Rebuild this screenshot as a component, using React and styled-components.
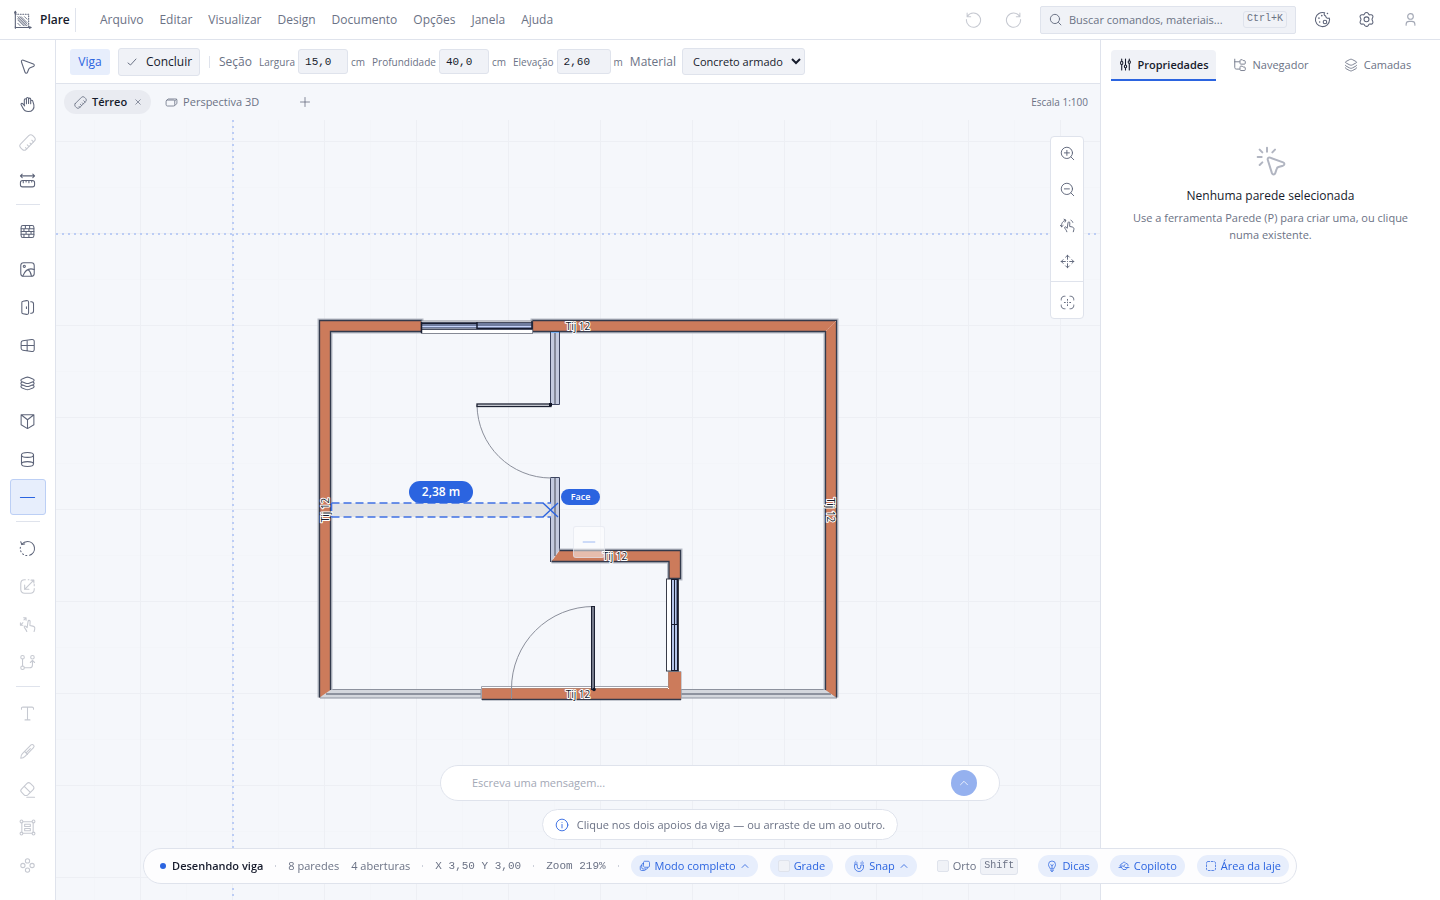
import React from "react";
import styled, { createGlobalStyle, css } from "styled-components";

const SANS = '"Open Sans", "Noto Sans", sans-serif';
const MONO = '"Liberation Mono", monospace';

const c = {
  ink: "#161b2c",
  text: "#6b7285",
  icon: "#5d6479",
  soft: "#a3a8b5",
  faint: "#c6c9d1",
  line: "#dfe3ec",
  field: "#f0f2f7",
  canvas: "#f5f7fb",
  blue: "#2b64e0",
  pale: "#e7eefc",
};

const GlobalStyle = createGlobalStyle`
  *, *::before, *::after { box-sizing: border-box; }
  body { margin: 0; background: #fff; font-family: ${SANS}; font-size: 12px; color: ${c.text}; }
  button, input, select { font: inherit; color: inherit; margin: 0; }
  button { cursor: pointer; }
`;

/* ---------- icons ---------- */

const Svg = styled.svg`
  flex: none;
  display: block;
  width: ${(p) => p.$size}px;
  height: ${(p) => p.$size}px;
  fill: none;
  stroke: currentColor;
  stroke-width: ${(p) => p.$weight};
  stroke-linecap: round;
  stroke-linejoin: round;
`;

const shapes = {
  logo: (
    <>
      <path d="M4 2v19h18" />
      <path d="M4 5h16v16" strokeDasharray="1 2" />
      <path d="M7 8l11 11M11 8l7 7M7 12l7 7M15 8l3 3M7 16l3 3M9 8l9 9M7 10l9 9" strokeWidth="1" />
      <path d="M3 3.500l1-2 1 2zM21 20l2 1-2 1zM4 20v2" />
    </>
  ),
  cursor: <path d="M3.500 5.600c-.6-1.700 1-3.100 2.600-2.500l14.200 5.400c1.800.7 1.700 2.900 0 3.500l-4.500 1.700c-1 .4-1.700 1.100-2.100 2.100l-1.700 4.400c-.7 1.700-2.900 1.700-3.500-.1z" />,
  hand: <path d="M7.500 13V5.500a1.500 1.500 0 0 1 3 0V11M10.500 10.500v-7a1.500 1.500 0 0 1 3 0v7M13.500 10.500v-6a1.500 1.500 0 0 1 3 0V11M16.500 11V7.500a1.500 1.500 0 0 1 3 0l1.500 5c1 5-2 9.500-8 9.500-4.500 0-6-2-7.500-5l-2.500-4.500c-.8-1.500 1-3 2.500-1.500l2.500 3M7.500 12.500V7" />,
  ruler: (
    <g transform="rotate(-45 12 12)">
      <rect x="0" y="6.500" width="24" height="11" rx="4" />
      <path d="M5 17.500V15M9.500 17.500V14M14 17.500V15M18.500 17.500V14" />
    </g>
  ),
  measure: (
    <>
      <rect x="2" y="12" width="20" height="9" rx="3" />
      <path d="M6 12v3M10 12v2M14 12v3M18 12v2M2 5.500h20M4.500 3L2 5.500 4.500 8M19.500 3L22 5.500 19.500 8" />
    </>
  ),
  wall: (
    <>
      <rect x="3" y="3.500" width="18" height="17" rx="2.500" />
      <path d="M3 8h18M3 12h18M3 16h18M9 3.500V8M15 3.500V8M7 8v4M14 8v4M10 12v4M17 12v4M7 16v4M14 16v4" />
    </>
  ),
  terrain: (
    <>
      <rect x="2.500" y="2.500" width="19" height="19" rx="4" />
      <circle cx="7.500" cy="7.500" r="1.500" />
      <path d="M5.500 21C9 12 14 9.500 21.500 12M13 12.500c2.500 1.500 4 4 4.500 8.500" />
    </>
  ),
  door: <path d="M4 5c0-1 .7-1.600 1.700-1.700l5-1c1.500-.3 2.800.7 2.800 2.200v15c0 1.500-1.300 2.500-2.800 2.200l-5-1C4.700 20.600 4 20 4 19zM10.500 11v2.500M16.500 4h1a3 3 0 0 1 3 3v10a3 3 0 0 1-3 3h-1" />,
  window: <path d="M3 8c0-1.500 1-2.400 2.400-2.600L18 3.500c2-.3 3.500.9 3.500 2.700v11.600c0 1.800-1.500 3-3.500 2.700L5.400 18.600C4 18.400 3 17.500 3 16zM11.500 4.500v15M3 12h18.500" />,
  slabs: <path d="M4.500 9.500C2 8 2 6.700 4.500 5.500l5-2c1.700-.7 3.300-.7 5 0l5 2c2.500 1.200 2.500 2.500 0 4l-5 2c-1.700.7-3.300.7-5 0zM4.500 10c-2.500 1.300-2.500 2.500 0 3.800l5 2c1.700.7 3.300.7 5 0l5-2c2.500-1.300 2.500-2.500 0-3.800M4.500 14.500c-2.500 1.300-2.500 2.500 0 3.800l5 2c1.700.7 3.300.7 5 0l5-2c2.500-1.300 2.500-2.500 0-3.800" />,
  roof: <path d="M3 2.500h18v14l-9 5.500-9-5.500zM3 2.500l9 7 9-7M12 9.500v12" />,
  column: (
    <>
      <ellipse cx="12" cy="5.500" rx="8.500" ry="3.500" />
      <path d="M3.500 5.500v13c0 2 3.800 3.500 8.500 3.500s8.500-1.500 8.500-3.500v-13M3.500 18.500c0-2 3.800-3.500 8.500-3.500s8.500 1.500 8.500 3.500" />
    </>
  ),
  beam: <path d="M2 12h20" />,
  rotate: (
    <>
      <path d="M4 6c2-2.500 5-4 8-4a10 10 0 0 1 3 19.500" />
      <path d="M2.500 2.500L4 6.500 8 5.500" />
      <path d="M11 22a10 10 0 0 1-9-12" strokeDasharray="1.500 3.500" />
    </>
  ),
  scale: <path d="M9 2.500H8C4 2.500 2.500 4 2.500 8v8c0 4 1.500 5.500 5.500 5.500h8c4 0 5.500-1.500 5.500-5.500v-1M13 2.500h1M21.500 9v2M17 3h4v4M20.500 3.500L8 16M8 10v6h6" />,
  gesture: <path d="M11 22c-.5-2.500-2.500-4-3.500-6-.7-1.500 1-2.600 2.200-1.400l1.800 1.900 1.300-9c.3-1.900 3-1.700 2.900.4l-.3 5.600 4 .8c2.300.5 3.300 2 2.800 4.200l-.9 3.500M2 9.500v3.500h3.500M2.500 12.500L5.500 9.500M6.500 2.500H10V6M9.500 3L7 5.500" />,
  spin: <path d="M11 22c-.5-2.500-2.500-4-3.500-6-.7-1.500 1-2.600 2.200-1.400l1.800 1.900 1.300-9c.3-1.900 3-1.700 2.900.4l-.3 5.600 4 .8c2.300.5 3.300 2 2.800 4.200l-.9 3.500M2.500 14C2 8.500 4 5 9 3.500M6.500 2l3 1.500L8 6.500M.5 11.500l2 2.500 2.500-2M17.500 3.500c1.500.7 2.500 2 3 3.500" />,
  path: (
    <>
      <circle cx="5" cy="4.500" r="2.500" />
      <circle cx="5" cy="19.500" r="2.500" />
      <circle cx="19" cy="4.500" r="2.500" />
      <path d="M5 7v10M7.500 19.500H15c3 0 4-1.500 4-4V10M16 12l3-3 3 3" />
    </>
  ),
  text: <path d="M3.500 6V5c0-1.300.7-2 2-2h13c1.300 0 2 .7 2 2v1M12 3v18M8.500 21h7" />,
  pencil: <path d="M2.500 21.500c0-3 .8-5 2.300-6.500L17 2.800c1-1 2.400-1 3.500.2 1 1 1 2.400 0 3.400L8.500 18.800C7 20.500 5.500 21.500 2.500 21.500zM8 12l4 4M10 14l6-6" />,
  eraser: <path d="M9.500 20.500c-1 0-1.600-.3-2.300-1l-3.700-3.700c-1.500-1.500-1.500-3 0-4.500l7.800-7.800c1.500-1.500 3.200-1.500 4.700 0L20 7.400c1.500 1.500 1.500 3.200 0 4.700l-7.500 7.400c-.8.7-1.700 1-3 1zM7.500 7.500l8.500 8.500M11 23h11" />,
  frame: (
    <>
      <path d="M5.500 4h13M5.500 20h13M4 5.500v13M20 5.500v13M8 7.500h8v3H8zM8 13.500h8v3H8z" />
      <circle cx="3.500" cy="3.500" r="2" />
      <circle cx="20.500" cy="3.500" r="2" />
      <circle cx="3.500" cy="20.500" r="2" />
      <circle cx="20.500" cy="20.500" r="2" />
    </>
  ),
  flower: (
    <>
      <circle cx="12" cy="5.500" r="3" />
      <circle cx="12" cy="18.500" r="3" />
      <circle cx="5.500" cy="12" r="3" />
      <circle cx="18.500" cy="12" r="3" />
    </>
  ),
  undo: <path d="M3 3v5h5M3.500 7.500A10 10 0 1 1 2 12" />,
  redo: <path d="M21 3v5h-5M20.500 7.500A10 10 0 1 0 22 12" />,
  search: (
    <>
      <circle cx="11" cy="11" r="8.500" />
      <path d="M17.500 17.500L22 22" />
    </>
  ),
  palette: (
    <>
      <path d="M22 12a10 10 0 1 1-7-9.500c-1.500 2-.5 4 1.500 4.500 0 2 2 4 5 3z" />
      <circle cx="15.500" cy="15.500" r="2.500" />
      <path d="M7 10v.1M11 6.500v.1M8 15.500v.1M19 3.500v.1" strokeWidth="2.200" />
    </>
  ),
  gear: (
    <>
      <path d="M9.500 3.500c1-1.700 4-1.700 5 0l.8 1.300c.3.500.9.700 1.500.6l1.500-.2c2-.2 3.500 2.300 2.500 4l-.8 1.600c-.3.700-.3 1.300 0 1.900l.8 1.800c1 1.700-.5 4.200-2.500 4l-1.500-.2c-.6-.1-1.200.2-1.500.7l-.8 1.400c-1 1.700-4 1.700-5 0L8.700 19c-.3-.5-.9-.8-1.500-.7l-1.500.2c-2 .2-3.500-2.300-2.500-4l.8-1.800c.3-.6.3-1.200 0-1.900l-.8-1.600c-1-1.700.5-4.200 2.500-4l1.500.2c.6.100 1.200-.1 1.500-.6z" />
      <circle cx="12" cy="11.800" r="3.500" />
    </>
  ),
  user: (
    <>
      <circle cx="12" cy="7" r="4.500" />
      <path d="M5 21v-1.500c0-3 2-4.500 5-4.500h4c3 0 5 1.500 5 4.500V21" />
    </>
  ),
  check: <path d="M4 14l5 4L20 6" />,
  close: <path d="M3 3l18 18M21 3L3 21" />,
  plus: <path d="M12 3v18M3 12h18" />,
  box: <path d="M2 10c0-1.500 1-2.500 2.500-2.500h11C17 7.500 18 8.500 18 10v6c0 1.500-1 2.500-2.500 2.500h-11C3 18.500 2 17.500 2 16zM3 8l3-2.500h14c1.300 0 2 .7 2 2V14l-4 3.500M18 9l3.500-3" />,
  sliders: <path d="M5 2v4M5 12v10M12 2v11M12 19v3M19 2v3M19 11v11M3 8a2 2 0 0 1 4 0v2a2 2 0 0 1-4 0zM10 15a2 2 0 0 1 4 0v1a2 2 0 0 1-4 0zM17 7a2 2 0 0 1 4 0v1a2 2 0 0 1-4 0z" />,
  tree: <path d="M3 2v14c0 2 1 3 3 3h5M3 6.500h8M12 4.500c0-1 .6-1.500 1.500-1.500H16l1.500 1.500h2c1 0 1.500.6 1.500 1.500v3c0 1-.5 1.500-1.500 1.500h-6c-1 0-1.500-.5-1.500-1.500zM12 15.500c0-1 .6-1.500 1.500-1.500H16l1.500 1.500h2c1 0 1.500.6 1.500 1.500v3c0 1-.5 1.500-1.500 1.500h-6c-1 0-1.500-.5-1.500-1.500z" />,
  layers: <path d="M3.500 8.500c-1.500-.8-1.500-1.700 0-2.500l6-3.200c1.700-.9 3.300-.9 5 0l6 3.200c1.500.8 1.500 1.700 0 2.500l-6 3.200c-1.700.9-3.300.9-5 0zM2.500 12.500c0 .6.300.9 1 1.300l6 3.200c1.700.9 3.300.9 5 0l6-3.200c.7-.4 1-.7 1-1.300M2.500 17c0 .6.300.9 1 1.300l6 3.200c1.700.9 3.300.9 5 0l6-3.200c.7-.4 1-.7 1-1.300" />,
  zoomIn: (
    <>
      <circle cx="11" cy="11" r="9" />
      <path d="M17.500 17.500L22 22M7 11h8M11 7v8" />
    </>
  ),
  zoomOut: (
    <>
      <circle cx="11" cy="11" r="9" />
      <path d="M17.500 17.500L22 22M7 11h8" />
    </>
  ),
  move: <path d="M12 2v6.500M12 15.500V22M2 12h6.500M15.500 12H22M9 5l3-3 3 3M9 19l3 3 3-3M5 9l-3 3 3 3M19 9l3 3-3 3M12 12v.1" />,
  fit: <path d="M2 8V7c0-3 2-5 5-5h1M16 2h1c3 0 5 2 5 5v1M22 16v1c0 3-2 5-5 5h-1M8 22H7c-3 0-5-2-5-5v-1M12 7v1.500M12 11.500v1M12 15.500V17M7 12h1.500M15.500 12H17" />,
  click: <path d="M9.600 11.300c-.4-1.300.5-2.300 1.800-1.800l9.700 3.500c1.300.5 1.300 2-.1 2.500l-3.400 1c-.7.200-1.100.6-1.300 1.300l-1.100 3.300c-.5 1.400-2 1.400-2.500 0zM9 2v3M3.500 3.500l2 2M2 9h3M3.500 15l2-2M15 3.500l-2 2" />,
  up: <path d="M5 15.500l7-7 7 7" />,
  info: (
    <>
      <circle cx="12" cy="12" r="10" />
      <path d="M12 11v6M12 7.500v.1" />
    </>
  ),
  copies: <path d="M9 5c0-1.500 1-2.500 2.500-2.500h7C20 2.500 21 3.500 21 5v7c0 1.500-1 2.500-2.500 2.500h-7C10 14.500 9 13.500 9 12zM9 7H8C6.500 7 5.500 8 5.500 9.500v6C5.500 17 6.500 18 8 18h7c1.500 0 2.500-1 2.500-2.500M5.500 11H5c-1.500 0-2.500 1-2.500 2.500v5C2.500 20 3.500 21 5 21h6c1.500 0 2.500-1 2.500-2.500" />,
  magnet: <path d="M3 10v4a9 9 0 0 0 18 0v-4h-5.500v4a3.500 3.500 0 0 1-7 0v-4zM3 6h5.500M15.500 6H21M5.500 2.500v.1M18.500 2.500v.1" />,
  bulb: <path d="M8.500 17c-.3-2-3.500-3.500-3.500-8a7 7 0 0 1 14 0c0 4.500-3.200 6-3.500 8zM9 20.500h6M11 23h2M9.500 9.500l2.500 1.500 2.500-1.500M12 11v6" />,
  copilot: <path d="M4 12c0-3 2-4 4-4 1-4 6-5 8-1 3 0 5 2 4 5M2 15h5l3 4h6l3-4h3M7 15l-2-3h6l3 3h5M12 12l2-3" />,
  area: <rect x="3" y="3" width="18" height="18" rx="3" strokeDasharray="3.500 3.200" />,
};

function Icon({ name, size = 17, weight = 1.5 }) {
  return (
    <Svg viewBox="0 0 24 24" $size={size} $weight={weight} aria-hidden="true">
      {shapes[name]}
    </Svg>
  );
}

/* ---------- shell ---------- */

const Shell = styled.div`
  min-height: 100vh;
  display: grid;
  grid-template: 40px 1fr / 56px minmax(0, 1fr) 340px;
`;

const Header = styled.header`
  grid-column: 1 / -1;
  display: flex;
  align-items: center;
  border-bottom: 1px solid ${c.line};
  padding: 0 12px;
`;

const Brand = styled.div`
  display: flex;
  align-items: center;
  gap: 8px;
  height: 24px;
  width: 64px;
  border-right: 1px solid ${c.line};
  color: ${c.ink};
  font-weight: 600;
  svg { color: ${c.icon}; }
`;

const Menu = styled.nav`
  display: flex;
  margin-left: 16px;
`;

const MenuItem = styled.button`
  border: 0;
  background: none;
  padding: 4px 8px;
  white-space: nowrap;
`;

const HeaderTools = styled.div`
  display: flex;
  align-items: center;
  margin-left: auto;
`;

const IconButton = styled.button`
  display: grid;
  place-items: center;
  width: ${(p) => p.$w || 36}px;
  height: ${(p) => p.$h || 36}px;
  border: 0;
  border-radius: 3px;
  padding: 0;
  background: none;
  color: ${(p) => c[p.$tone || "icon"]};
  ${(p) =>
    p.$active &&
    css`
      background: ${c.pale};
      border: 1px solid #bccff5;
      color: ${c.blue};
    `}
`;

const Search = styled.label`
  display: flex;
  align-items: center;
  gap: 7px;
  width: 256px;
  height: 28px;
  margin: 0 8px 0 7px;
  padding: 0 8px;
  border: 1px solid ${c.line};
  border-radius: 2px;
  background: ${c.field};
`;

const SearchInput = styled.input`
  flex: 1;
  min-width: 0;
  border: 0;
  padding: 0;
  outline: 0;
  background: none;
  font-size: 11px;
  line-height: 16px;
  &::placeholder { color: ${c.text}; opacity: 1; }
`;

const Kbd = styled.kbd`
  font: 10px/14px ${MONO};
  border: 1px solid ${c.line};
  border-radius: 3px;
  background: ${c.field};
  padding: 0 3px 1px;
  color: ${c.text};
`;

const Rail = styled.aside`
  display: flex;
  flex-direction: column;
  align-items: center;
  gap: 2px;
  padding-top: 8px;
  border-right: 1px solid ${c.line};
`;

const RailRule = styled.hr`
  width: 24px;
  height: 1px;
  margin: 4px 0 6px;
  border: 0;
  background: ${c.line};
`;

/* ---------- work area ---------- */

const Work = styled.main`
  display: flex;
  flex-direction: column;
  min-width: 0;
  background: ${c.canvas};
`;

const OptionsBar = styled.form`
  display: flex;
  align-items: center;
  height: 44px;
  padding: 0 14px;
  background: #fff;
  border-bottom: 1px solid ${c.line};
`;

const ToolName = styled.span`
  width: 40px;
  line-height: 26px;
  text-align: center;
  border-radius: 3px;
  background: ${c.pale};
  color: ${c.blue};
  font-weight: 500;
`;

const DoneButton = styled.button`
  display: flex;
  align-items: center;
  justify-content: center;
  gap: 8px;
  width: 82px;
  height: 28px;
  margin-left: 8px;
  padding: 0;
  border: 1px solid ${c.line};
  border-radius: 3px;
  background: ${c.field};
  color: ${c.ink};
  svg { color: ${c.text}; }
`;

const Bar = styled.span`
  width: 1px;
  height: 12px;
  margin: 0 9px;
  background: ${c.line};
`;

const Field = styled.label`
  display: flex;
  align-items: center;
  gap: 3px;
  font-size: 10px;
  margin-left: 7px;
  white-space: nowrap;
`;

const NumberInput = styled.input`
  width: ${(p) => p.$w}px;
  height: 25px;
  padding: 0 6px;
  border: 1px solid ${c.line};
  border-radius: 3px;
  background: ${c.field};
  color: ${c.ink};
  font: 11px ${MONO};
`;

const SelectLabel = styled.label`
  display: flex;
  align-items: center;
  gap: 6px;
  margin-left: 7px;
`;

const Select = styled.select`
  width: 123px;
  height: 27px;
  padding: 0 0 0 6px;
  border: 1px solid ${c.line};
  border-radius: 3px;
  background: ${c.field};
  color: ${c.ink};
  font-size: 11px;
`;

const ViewTabs = styled.div`
  display: flex;
  align-items: center;
  height: 36px;
  padding: 0 12px 0 8px;
  font-size: 11px;
  line-height: 16px;
`;

const ViewTab = styled.button`
  display: flex;
  align-items: center;
  gap: 5px;
  height: 24px;
  padding: 0 10px;
  border: 0;
  border-radius: 12px;
  background: ${(p) => (p.$active ? "#e9ebf1" : "none")};
  color: ${(p) => (p.$active ? c.ink : c.text)};
  font-weight: ${(p) => (p.$active ? 600 : 400)};
  margin-right: 4px;
  svg { color: ${c.text}; }
  svg + svg { margin-left: 4px; }
`;

const TabClose = styled.span`
  padding-left: 3px;
`;

const ScaleNote = styled.span`
  margin-left: auto;
  font-size: 10px;
`;

const Canvas = styled.div`
  position: relative;
  flex: 1;
  overflow: hidden;
`;

const Plan = styled.svg`
  position: absolute;
  inset: 0;
  width: 100%;
  height: 100%;
`;

const WallLabel = styled.text`
  font: 500 10px ${SANS};
  fill: ${c.ink};
  stroke: #fff;
  stroke-width: 2px;
  stroke-linejoin: round;
  paint-order: stroke;
  text-anchor: middle;
`;

const Tag = styled.span`
  position: absolute;
  left: ${(p) => p.$x}px;
  top: ${(p) => p.$y}px;
  width: ${(p) => p.$w}px;
  line-height: ${(p) => p.$h}px;
  border-radius: 11px;
  background: ${c.blue};
  color: #fff;
  font-size: ${(p) => p.$font}px;
  font-weight: 600;
  text-align: center;
`;

const Ghost = styled.span`
  position: absolute;
  left: 517px;
  top: 406px;
  width: 32px;
  height: 32px;
  display: grid;
  place-items: center;
  border: 1px solid rgba(223, 227, 236, 0.6);
  border-radius: 3px;
  background: rgba(255, 255, 255, 0.5);
  color: #92b0f1;
`;

const ZoomPanel = styled.div`
  position: absolute;
  right: 16px;
  top: 16px;
  width: 34px;
  border: 1px solid ${c.line};
  border-radius: 4px;
  background: #fff;
`;

const ZoomGroup = styled.div`
  display: grid;
  gap: 4px;
  padding-bottom: 4px;
  & + & {
    border-top: 1px solid ${c.line};
    padding: 4px 0 0;
  }
`;

/* ---------- side panel ---------- */

const Panel = styled.aside`
  border-left: 1px solid ${c.line};
  padding: 10px;
`;

const PanelTabs = styled.div`
  display: flex;
  gap: 2px;
`;

const PanelTab = styled.button`
  flex: 1;
  display: flex;
  align-items: center;
  justify-content: center;
  gap: 6px;
  height: 31px;
  padding: 0;
  border: 0;
  border-bottom: 2px solid ${(p) => (p.$active ? c.blue : "transparent")};
  border-radius: 4px 4px 0 0;
  background: ${(p) => (p.$active ? c.field : "none")};
  color: ${(p) => (p.$active ? c.ink : c.text)};
  font-size: 11px;
  line-height: 16px;
  font-weight: ${(p) => (p.$active ? 600 : 500)};
`;

const Empty = styled.section`
  display: flex;
  flex-direction: column;
  align-items: center;
  padding: 64px 16px;
  text-align: center;
  font-size: 11px;
  line-height: 17px;
  svg { color: #b1b5c1; }
`;

const EmptyTitle = styled.h2`
  margin: 10px 0 4px;
  font-size: 12px;
  font-weight: 500;
  line-height: 18px;
  color: ${c.ink};
`;

const EmptyText = styled.p`
  margin: 0;
`;

/* ---------- floating bars ---------- */

const Dock = styled.div`
  position: fixed;
  left: 0;
  right: 0;
  bottom: 16px;
  display: flex;
  flex-direction: column;
  align-items: center;
  gap: 8px;
  pointer-events: none;
  & > * { pointer-events: auto; }
`;

const Chat = styled.form`
  display: flex;
  align-items: center;
  width: 560px;
  height: 36px;
  padding: 0 22px 0 31px;
  border: 1px solid ${c.line};
  border-radius: 18px;
  background: #fff;
`;

const ChatInput = styled.input`
  flex: 1;
  border: 0;
  outline: 0;
  padding: 0;
  background: none;
  font-size: 11px;
  line-height: 16px;
  &::placeholder { color: #a3a8b6; opacity: 1; }
`;

const Send = styled.button`
  display: grid;
  place-items: center;
  width: 26px;
  height: 26px;
  padding: 0;
  border: 0;
  border-radius: 50%;
  background: #95b1ef;
  color: #fff;
`;

const Hint = styled.div`
  display: flex;
  align-items: center;
  gap: 8px;
  height: 31px;
  padding: 0 12px;
  border: 1px solid ${c.line};
  border-radius: 16px;
  background: #fff;
  font-size: 11px;
  white-space: nowrap;
  svg { color: ${c.blue}; }
`;

const Status = styled.footer`
  display: flex;
  align-items: center;
  gap: 12px;
  height: 36px;
  padding: 0 7px 0 16px;
  border: 1px solid ${c.line};
  border-radius: 18px;
  background: #fdfdfe;
  font-size: 11px;
  line-height: 16px;
  white-space: nowrap;
`;

const Mode = styled.strong`
  display: flex;
  align-items: center;
  gap: 6px;
  color: ${c.ink};
  font-weight: 600;
  &::before {
    content: "";
    width: 6px;
    height: 6px;
    border-radius: 50%;
    background: ${c.blue};
  }
`;

const Sep = styled.i`
  width: 1px;
  height: 2px;
  background: #ccd0da;
`;

const Mono = styled.span`
  font: 11px ${MONO};
`;

const chip = css`
  display: flex;
  align-items: center;
  gap: 4px;
  height: 22px;
  padding: 0 8px;
  border: 0;
  border-radius: 11px;
  background: ${c.pale};
  color: ${c.blue};
  font-weight: 500;
`;

const Chip = styled.button`
  ${chip}
`;

const ChipLabel = styled.label`
  ${chip}
`;

const Toggle = styled.label`
  display: flex;
  align-items: center;
  gap: 4px;
  padding: 0 8px;
`;

const Tick = styled.input`
  appearance: none;
  width: 12px;
  height: 12px;
  border: 1px solid ${c.line};
  border-radius: 2px;
  background: ${c.field};
`;

/* ---------- plan drawing ---------- */

const dark = "#333a4c";
const halo = "#b8bcc6";
const brick = "#cc7b5b";
const glass = "#c3cadf";

function Brick({ d }) {
  return (
    <>
      <path d={d} fill="none" stroke={halo} strokeWidth="4" />
      <path d={d} fill={brick} stroke={dark} strokeWidth="1.3" />
    </>
  );
}

function FloorPlan() {
  return (
    <Plan aria-label="Planta do térreo">
      <defs>
        <pattern id="grid" x="84" y="21" width="92" height="92" patternUnits="userSpaceOnUse">
          <path d="M46.500 0v92M0 46.500h92" stroke="#f3f5f9" />
          <path d="M.5 0v92M0 .5h92" stroke="#edeff4" />
        </pattern>
      </defs>
      <rect width="100%" height="100%" fill="url(#grid)" />
      <line x1="177" y1="0" x2="177" y2="100%" stroke="#bccdf5" strokeWidth="2" strokeDasharray="2 4" />
      <line x1="0" y1="114" x2="100%" y2="114" stroke="#bccdf5" strokeWidth="2" strokeDasharray="2 4" />
      <g transform="translate(-56 -120)">
        {/* lower glazed walls */}
        <g stroke="#8d929e" fill="#d4d7dd">
          <path d="M322 689.500H481V698H320z" />
          <path d="M681 689.500H827L837 698H681z" />
          <path d="M326 694H481M681 694H831" strokeWidth="2" />
        </g>
        {/* outer brick walls */}
        <Brick d="M319.500 697.500V320.500H421.500V331.500H330.500V690" />
        <Brick d="M836.500 697.500V320.500H532.500V331.500H825.500V690" />
        <path d="M826 331L836 321" stroke="#d9a391" strokeDasharray="2 1" />
        {/* partition */}
        <g fill={glass} stroke="#3d4560">
          <path d="M550.500 332V404.500H559.500V332" />
          <path d="M550.500 562V477.500H559.500V550" />
          <path d="M555 332V404M555 478V556" stroke="#858a9b" strokeWidth="2" />
          <path d="M551 332.500H559" stroke="#76aef0" />
        </g>
        {/* stepped brick wall */}
        <Brick d="M559.500 550.500H680.500V578.500H669V561.500H551.500" />
        <path d="M481.500 700V686.500H668.500V671.500H681V700" fill="#fff" stroke="#9fa3ae" />
        <path d="M482 689H669V672H681V699H482z" fill={brick} />
        <path d="M482 699.500H681" stroke={dark} strokeWidth="1.300" />
        <path d="M668.500 672V688M482 688.500H668" stroke="#b58370" />
        {/* door at the partition */}
        <path d="M477 405A74 74 0 0 0 551 478" fill="none" stroke="#8b8f9b" />
        <rect x="477" y="404" width="74" height="2.500" fill="#dfe1e8" stroke="#1d2233" strokeWidth="1.300" />
        <rect x="549" y="403" width="3" height="3" fill="#111626" />
        {/* entrance door */}
        <path d="M511.500 699V689A82 82 0 0 1 594 606.500" fill="none" stroke="#8b8f9b" />
        <rect x="591.500" y="606.500" width="3" height="83" fill="#777c8c" stroke="#1d2233" />
        <circle cx="594" cy="689.500" r="1.800" fill="#111626" />
        {/* top window */}
        <rect x="421.500" y="321" width="111" height="12.500" fill="#fff" stroke="#868a95" />
        <rect x="421.500" y="322.500" width="111" height="7" fill="#6f7c9e" stroke="#474d60" />
        <path d="M422 326.500H532" stroke="#c5d3fa" />
        <path d="M422 323.500H477M477 328.500H532" stroke="#171c30" />
        <path d="M422 328.500H477" stroke="#8990a3" />
        <path d="M477 322V329M421.500 322V333M532 321V329" stroke="#171c30" strokeWidth="1.500" />
        {/* side window */}
        <rect x="666.500" y="579" width="12" height="92" fill="#fff" stroke="#3a3d49" />
        <rect x="671.500" y="579.500" width="6" height="91" fill="#b5c5ea" stroke="#171c30" />
        <path d="M674.500 580V671M671 624.500H678" stroke="#171c30" />
        <path d="M676.500 580V624" stroke="#6f7c9e" />
        {/* beam being drawn */}
        <rect x="331" y="503" width="220" height="14" fill="#e2e3e6" />
        <path d="M331.500 503H551M331.500 517H551M331.500 503V517" fill="none" stroke="#3f70e3" strokeWidth="1.600" strokeDasharray="8 4" />
        <path d="M543 503L558 517M558 503L543 517" fill="none" stroke={c.blue} strokeWidth="1.400" />
        <WallLabel x="578" y="330">Tij 12</WallLabel>
        <WallLabel x="615" y="560">Tij 12</WallLabel>
        <WallLabel x="578" y="698">Tij 12</WallLabel>
        <WallLabel transform="translate(329 510) rotate(-90)">Tij 12</WallLabel>
        <WallLabel transform="translate(827 510) rotate(90)">Tij 12</WallLabel>
      </g>
    </Plan>
  );
}

/* ---------- page ---------- */

const menus = ["Arquivo", "Editar", "Visualizar", "Design", "Documento", "Opções", "Janela", "Ajuda"];

const rail = [
  [["cursor", "Selecionar"], ["hand", "Mover vista"], ["ruler", "Régua", "faint"], ["measure", "Medir"]],
  [["wall", "Parede"], ["terrain", "Terreno"], ["door", "Porta"], ["window", "Janela"], ["slabs", "Laje"], ["roof", "Telhado"], ["column", "Pilar"], ["beam", "Viga"]],
  [["rotate", "Girar"], ["scale", "Escalar", "faint"], ["gesture", "Gesto", "faint"], ["path", "Caminho", "faint"]],
  [["text", "Texto", "faint"], ["pencil", "Lápis", "faint"], ["eraser", "Borracha", "faint"], ["frame", "Quadro", "faint"], ["flower", "Vegetação", "faint"]],
];

const fields = [
  ["Largura", "15,0", "cm", 50],
  ["Profundidade", "40,0", "cm", 50],
  ["Elevação", "2,60", "m", 54],
];

export default function App() {
  return (
    <>
      <GlobalStyle />
      <Shell>
        <Header>
          <Brand>
            <Icon name="logo" size={20} weight={1.3} />
            Plare
          </Brand>
          <Menu>
            {menus.map((m) => (
              <MenuItem key={m}>{m}</MenuItem>
            ))}
          </Menu>
          <HeaderTools>
            <IconButton $w={40} $tone="faint" aria-label="Desfazer"><Icon name="undo" /></IconButton>
            <IconButton $w={40} $tone="faint" aria-label="Refazer"><Icon name="redo" /></IconButton>
            <Search>
              <Icon name="search" size={13} weight={1.8} />
              <SearchInput aria-label="Buscar" placeholder="Buscar comandos, materiais..." />
              <Kbd>Ctrl+K</Kbd>
            </Search>
            <IconButton $w={36} aria-label="Tema"><Icon name="palette" /></IconButton>
            <IconButton $w={52} aria-label="Configurações"><Icon name="gear" /></IconButton>
            <IconButton $w={36} $tone="soft" aria-label="Conta"><Icon name="user" size={15} weight={1.8} /></IconButton>
          </HeaderTools>
        </Header>

        <Rail>
          {rail.map((group, i) => (
            <React.Fragment key={i}>
              {i > 0 && <RailRule />}
              {group.map(([name, label, tone]) => (
                <IconButton key={name} aria-label={label} $tone={tone} $active={name === "beam"}>
                  <Icon name={name} />
                </IconButton>
              ))}
            </React.Fragment>
          ))}
        </Rail>

        <Work>
          <OptionsBar>
            <ToolName>Viga</ToolName>
            <DoneButton type="button">
              <Icon name="check" size={12} weight={2} />
              Concluir
            </DoneButton>
            <Bar />
            <span>Seção</span>
            {fields.map(([label, value, unit, w]) => (
              <Field key={label}>
                {label}
                <NumberInput $w={w} defaultValue={value} />
                {unit}
              </Field>
            ))}
            <SelectLabel>
              Material
              <Select defaultValue="Concreto armado">
                <option>Concreto armado</option>
              </Select>
            </SelectLabel>
          </OptionsBar>

          <ViewTabs>
            <ViewTab $active>
              <Icon name="ruler" size={13} />
              Térreo
              <TabClose><Icon name="close" size={6} weight={3} /></TabClose>
            </ViewTab>
            <ViewTab>
              <Icon name="box" size={13} />
              Perspectiva 3D
            </ViewTab>
            <IconButton $w={64} $h={24} aria-label="Nova vista"><Icon name="plus" size={12} /></IconButton>
            <ScaleNote>Escala 1:100</ScaleNote>
          </ViewTabs>

          <Canvas>
            <FloorPlan />
            <Tag $x={353} $y={361} $w={64} $h={22} $font={12}>2,38 m</Tag>
            <Tag $x={505} $y={369} $w={39} $h={16} $font={9}>Face</Tag>
            <Ghost><Icon name="beam" size={14} /></Ghost>
            <ZoomPanel>
              <ZoomGroup>
                {[["zoomIn", "Aproximar"], ["zoomOut", "Afastar"], ["spin", "Girar vista"], ["move", "Mover"]].map(([n, l]) => (
                  <IconButton key={n} $w={32} $h={32} aria-label={l}><Icon name={n} size={15} /></IconButton>
                ))}
              </ZoomGroup>
              <ZoomGroup>
                <IconButton $w={32} $h={32} aria-label="Enquadrar"><Icon name="fit" size={15} /></IconButton>
              </ZoomGroup>
            </ZoomPanel>
          </Canvas>
        </Work>

        <Panel>
          <PanelTabs>
            <PanelTab $active><Icon name="sliders" size={13} weight={2} />Propriedades</PanelTab>
            <PanelTab><Icon name="tree" size={14} />Navegador</PanelTab>
            <PanelTab><Icon name="layers" size={14} />Camadas</PanelTab>
          </PanelTabs>
          <Empty>
            <Icon name="click" size={32} />
            <EmptyTitle>Nenhuma parede selecionada</EmptyTitle>
            <EmptyText>Use a ferramenta Parede (P) para criar uma, ou clique numa existente.</EmptyText>
          </Empty>
        </Panel>
      </Shell>

      <Dock>
        <Chat>
          <ChatInput aria-label="Mensagem" placeholder="Escreva uma mensagem..." />
          <Send type="button" aria-label="Enviar"><Icon name="up" size={12} /></Send>
        </Chat>
        <Hint>
          <Icon name="info" size={14} />
          Clique nos dois apoios da viga — ou arraste de um ao outro.
        </Hint>
        <Status>
          <Mode>Desenhando viga</Mode>
          <Sep />
          <span>8 paredes</span>
          <span>4 aberturas</span>
          <Sep />
          <Mono>X 3,50 Y 3,00</Mono>
          <Sep />
          <Mono>Zoom 219%</Mono>
          <Sep />
          <Chip><Icon name="copies" size={12} />Modo completo<Icon name="up" size={10} weight={2} /></Chip>
          <ChipLabel><Tick type="checkbox" />Grade</ChipLabel>
          <Chip><Icon name="magnet" size={12} />Snap<Icon name="up" size={10} weight={2} /></Chip>
          <Toggle><Tick type="checkbox" />Orto <Kbd>Shift</Kbd></Toggle>
          <Chip><Icon name="bulb" size={12} />Dicas</Chip>
          <Chip><Icon name="copilot" size={12} />Copiloto</Chip>
          <Chip><Icon name="area" size={12} />Área da laje</Chip>
        </Status>
      </Dock>
    </>
  );
}
